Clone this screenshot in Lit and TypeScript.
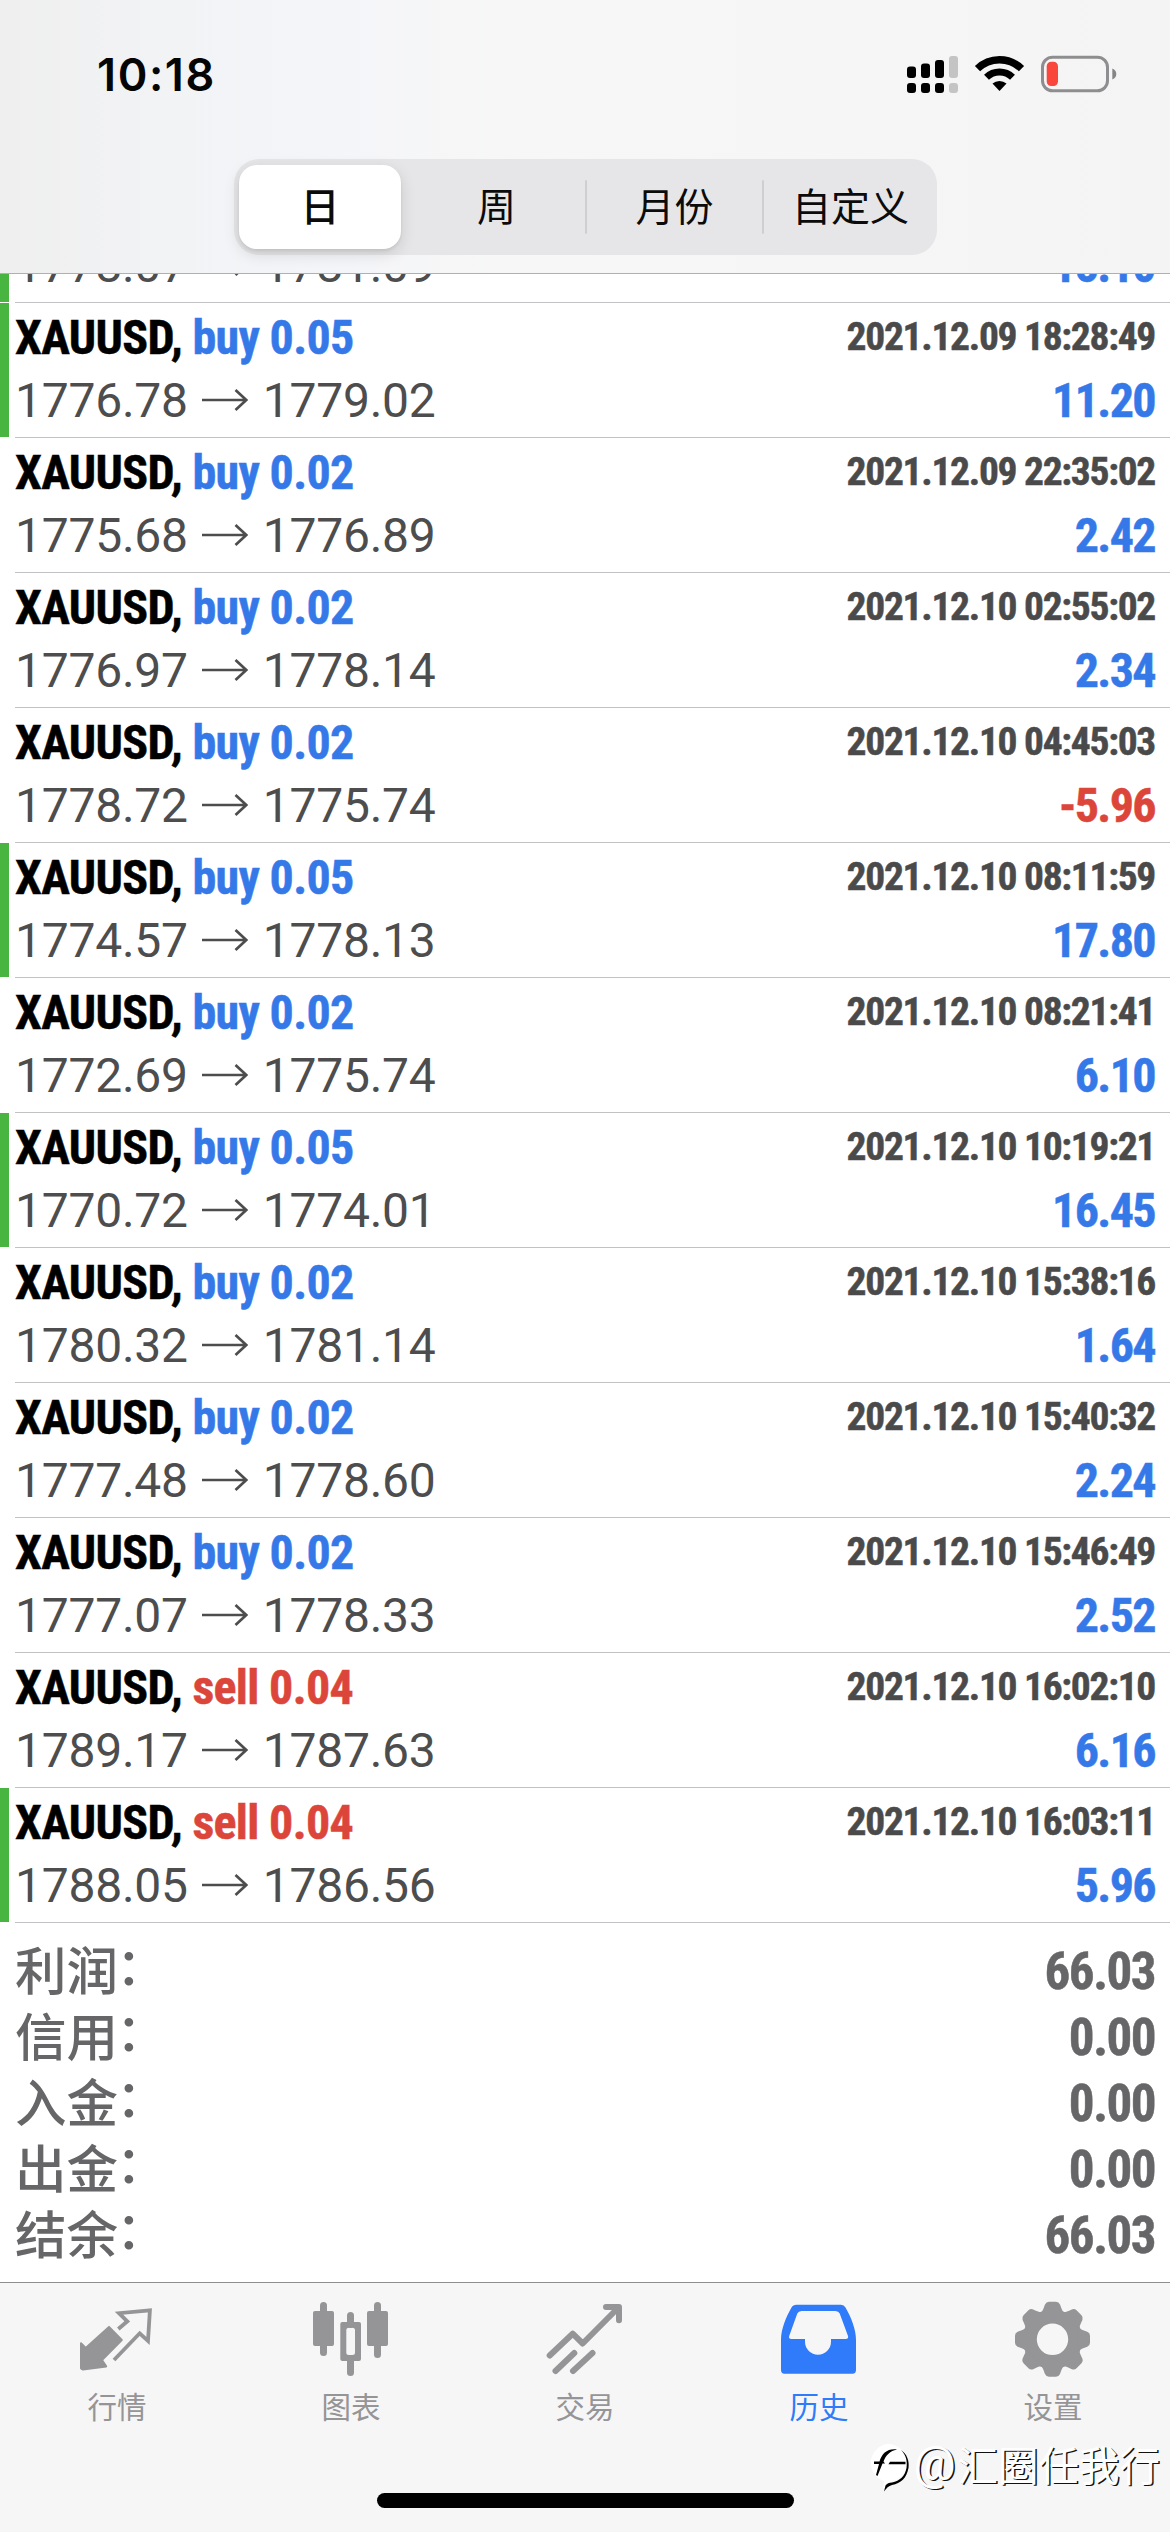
import { LitElement, html, css, svg } from "lit";
import { customElement } from "lit/decorators.js";
import { classMap } from "lit/directives/class-map.js";

interface Deal {
  side: "buy" | "sell";
  lots: string;
  open: string;
  close: string;
  time: string;
  profit: string;
  marked?: boolean;
}

const deal = (
  side: "buy" | "sell", lots: string, open: string, close: string,
  time: string, profit: string, marked = false,
): Deal => ({ side, lots, open, close, time, profit, marked });

const DEALS: Deal[] = [
  deal("buy", "0.05", "1778.07", "1781.09", "", "15.10", true),
  deal("buy", "0.05", "1776.78", "1779.02", "2021.12.09 18:28:49", "11.20", true),
  deal("buy", "0.02", "1775.68", "1776.89", "2021.12.09 22:35:02", "2.42"),
  deal("buy", "0.02", "1776.97", "1778.14", "2021.12.10 02:55:02", "2.34"),
  deal("buy", "0.02", "1778.72", "1775.74", "2021.12.10 04:45:03", "-5.96"),
  deal("buy", "0.05", "1774.57", "1778.13", "2021.12.10 08:11:59", "17.80", true),
  deal("buy", "0.02", "1772.69", "1775.74", "2021.12.10 08:21:41", "6.10"),
  deal("buy", "0.05", "1770.72", "1774.01", "2021.12.10 10:19:21", "16.45", true),
  deal("buy", "0.02", "1780.32", "1781.14", "2021.12.10 15:38:16", "1.64"),
  deal("buy", "0.02", "1777.48", "1778.60", "2021.12.10 15:40:32", "2.24"),
  deal("buy", "0.02", "1777.07", "1778.33", "2021.12.10 15:46:49", "2.52"),
  deal("sell", "0.04", "1789.17", "1787.63", "2021.12.10 16:02:10", "6.16"),
  deal("sell", "0.04", "1788.05", "1786.56", "2021.12.10 16:03:11", "5.96", true),
];

const SUMMARY = [
  ["利润", "66.03"],
  ["信用", "0.00"],
  ["入金", "0.00"],
  ["出金", "0.00"],
  ["结余", "66.03"],
];

const TABS = [
  {
    label: "行情",
    icon: svg`
      <path fill="currentColor" stroke="currentColor" stroke-width="2" stroke-linejoin="round"
        d="M9 43.2 13.7 48 37 26.9 49.8 40 30 60 34.2 66.4 11 69.6 9 68.3Z"/>
      <path fill="none" stroke="currentColor" stroke-width="3.8"
        d="M46.3 29 55.3 21.3 47 13.2 77.9 10.3 76 41 67.7 33.3 42 60"/>`,
  },
  {
    label: "图表",
    icon: svg`<g fill="currentColor">
      <rect x="14" y="2" width="7" height="54" rx="3.5"/>
      <rect x="7" y="11" width="21" height="35" rx="2"/>
      <rect x="68" y="2" width="7" height="56" rx="3.5"/>
      <rect x="61" y="11" width="21" height="35" rx="2"/>
      <rect x="41" y="12" width="7" height="16" rx="3.5"/>
      <rect x="41" y="56" width="7" height="20" rx="3.5"/>
      <path fill-rule="evenodd" d="M36.300 22h16.700a2 2 0 0 1 2 2v35a2 2 0 0 1-2 2h-16.700a2 2 0 0 1-2-2v-35a2 2 0 0 1 2-2Z
        M42.800 27.700a2.500 2.500 0 0 0-2.500 2.500v22.300a2.500 2.500 0 0 0 2.500 2.500h3.700a2.500 2.500 0 0 0 2.500-2.500v-22.300a2.500 2.500 0 0 0-2.500-2.500Z"/>
    </g>`,
  },
  {
    label: "交易",
    icon: svg`<path fill="none" stroke="currentColor" stroke-width="6" stroke-linecap="round" stroke-linejoin="round"
      d="M9.700 55.500 32.700 33.700 42.700 43.500 78 8M66 6.900H79V20.200M15.500 71 34.300 53M33 71 52.500 53"/>`,
  },
  {
    label: "历史",
    icon: svg`<path fill="currentColor" fill-rule="evenodd"
      d="M22.500 4.700H67Q70 4.700 71.500 7.500C77 17 82 29 82 40V70Q82 73.700 78.500 73.700H10.500Q7 73.700 7 70V40C7 29 12 17 17.500 7.500Q19 4.700 22.500 4.700Z
        M27.500 11Q24.500 11 23.300 13.600L15.200 36Q14.300 39 17.500 39H31V42C31 49 37 54.700 44 54.700S57 49 57 42V39H71.500Q74.800 39 74 36L65.700 13.600Q64.600 11 61.500 11Z"/>`,
    active: true,
  },
  {
    label: "设置",
    icon: svg`
      <circle cx="44.500" cy="39.300" r="22.700" fill="none" stroke="currentColor" stroke-width="14"/>
      ${[0, 45, 90, 135, 180, 225, 270, 315].map((a) => svg`
        <path fill="currentColor" transform="rotate(${a} 44.500 39.300)"
          d="M31 14C35 12 35.500 8 37 4.500Q38.200 1.800 41 1.800H48Q50.800 1.800 52 4.500C53.500 8 54 12 58 14Z"/>`)}`,
  },
];

@customElement("status-bar")
class StatusBar extends LitElement {
  static styles = css`
    :host {
      display: flex;
      justify-content: space-between;
      padding: 47px 52px 0 97px;
      height: 112px;
      box-sizing: border-box;
    }
    .time {
      font: 600 45px/55px Inter, "Liberation Sans", sans-serif;
      letter-spacing: 1.600px;
      color: #050505;
    }
    svg { width: 212px; height: 40px; margin-top: 8px; }
  `;
  render() {
    return html`
      <div class="time">10:18</div>
      <svg viewBox="0 0 212 40">
        <rect x="1" y="11.500" width="9" height="11.500" rx="3"/>
        <rect x="15" y="8.500" width="9" height="14.500" rx="3"/>
        <rect x="29" y="5" width="9" height="18" rx="3"/>
        <rect x="43" y="1" width="9" height="22" rx="3" fill="#c4c4c5"/>
        <rect x="1" y="28" width="9" height="10" rx="3"/>
        <rect x="15" y="28" width="9" height="10" rx="3"/>
        <rect x="29" y="28" width="9" height="10" rx="3"/>
        <rect x="43" y="28" width="9" height="10" rx="3" fill="#c4c4c5"/>
        <path fill="none" stroke="#000" stroke-width="7.400" d="M71.500 13.700A31.500 31.500 0 0 1 115.500 13.700"/>
        <path fill="none" stroke="#000" stroke-width="7" d="M80.500 22.300A18.600 18.600 0 0 1 106.500 22.300"/>
        <path d="M86.500 28.600A10.500 10.500 0 0 1 100.500 28.600L93.500 36Z"/>
        <rect x="136.500" y="2.200" width="65" height="33.600" rx="10" fill="none" stroke="#8e8e90" stroke-width="3"/>
        <rect x="140.700" y="6.800" width="11.300" height="24.200" rx="4.500" fill="#f9473b"/>
        <path fill="#858587" d="M206.300 13.500C209 14.500 210.300 16.500 210.300 19S209 23.500 206.300 24.500Z"/>
      </svg>`;
  }
}

@customElement("period-switch")
class PeriodSwitch extends LitElement {
  static styles = css`
    :host {
      display: grid;
      grid-template-columns: 174px 177px 177px 175px;
      align-items: center;
      width: 703px;
      height: 96px;
      border-radius: 25px;
      background: #e6e6e8;
      font: 400 39px/79px "Noto Sans CJK SC", sans-serif;
      color: #0b0b0b;
      text-align: center;
    }
    .seg { display: flex; height: 84px; }
    .seg .label { flex: 1; }
    .seg.ruled::before {
      content: "";
      width: 2px;
      height: 54px;
      margin-top: 15px;
      border-radius: 1px;
      background: #cfcfd2;
    }
    .seg.on {
      width: 162px;
      margin-left: 5px;
      border-radius: 18px;
      background: #fff;
      font-weight: 500;
      box-shadow: 0 5px 16px rgba(0, 0, 0, 0.13), 0 2px 3px rgba(0, 0, 0, 0.07);
    }
  `;
  render() {
    return html`
      <div class="seg on"><span class="label">日</span></div>
      <div class="seg"><span class="label">周</span></div>
      <div class="seg ruled"><span class="label">月份</span></div>
      <div class="seg ruled"><span class="label">自定义</span></div>`;
  }
}

@customElement("deal-list")
class DealList extends LitElement {
  static styles = css`
    :host {
      display: flex;
      flex-direction: column;
      justify-content: flex-end;
      height: 1649px;
      overflow: hidden;
      background: #fff;
      font-family: "Roboto Condensed", Roboto, "Liberation Sans", sans-serif;
      font-weight: 700;
    }
    .row { display: flex; flex: none; height: 135px; }
    .mark { width: 9px; height: 134px; margin-right: 6px; }
    .mark.on { background: #47b53f; }
    .body {
      flex: 1;
      display: grid;
      grid-template: 64px 62px / auto auto;
      justify-content: space-between;
      padding: 3px 15px 0 0;
      border-bottom: 1px solid #c2c2c4;
      white-space: nowrap;
    }
    .title, .time, .profit { -webkit-text-stroke: 0.5px currentColor; }
    .title { font-size: 48px; line-height: 64px; letter-spacing: -0.680px; color: #000; }
    .time { font-size: 39.500px; line-height: 62px; letter-spacing: -1.300px; color: #4a4a4b; text-align: right; }
    .prices {
      display: flex;
      align-items: center;
      font: 400 48px/62px Roboto, "Liberation Sans", sans-serif;
      letter-spacing: -0.250px;
      color: #4d4d4e;
    }
    .prices svg { width: 46px; height: 24px; margin: 0 15px 2px 14px; }
    .profit { font-size: 48px; line-height: 62px; letter-spacing: -1.600px; text-align: right; }
    .buy, .gain { color: #3579e9; }
    .sell, .loss { color: #dc463a; }
  `;
  render() {
    return DEALS.map((d) => {
      const loss = d.profit.startsWith("-");
      return html`
        <div class="row">
          <div class=${classMap({ mark: true, on: !!d.marked })}></div>
          <div class="body">
            <div class="title">${d.time ? html`XAUUSD, <span class=${d.side}>${d.side} ${d.lots}</span>` : ""}</div>
            <div class="time">${d.time}</div>
            <div class="prices">
              <span>${d.open}</span>
              <svg viewBox="0 0 46 24"><path fill="none" stroke="currentColor" stroke-width="2.700" d="M0 12H44M33.500 2 44.300 12 33.500 22"/></svg>
              <span>${d.close}</span>
            </div>
            <div class=${classMap({ profit: true, loss, gain: !loss })}>${d.profit}</div>
          </div>
        </div>`;
    });
  }
}

@customElement("deal-summary")
class DealSummary extends LitElement {
  static styles = css`
    :host {
      display: block;
      height: 359px;
      box-sizing: border-box;
      padding: 14px 15px 0;
      background: #fff;
      color: #666567;
    }
    .line { display: flex; justify-content: space-between; height: 66px; }
    .name { display: flex; font: 500 51.500px/62px "Noto Sans CJK SC", sans-serif; }
    .colon { line-height: 52px; margin-left: -2px; }
    .value {
      font: 700 51px/70px "Roboto Condensed", Roboto, sans-serif;
      letter-spacing: -1.500px;
      -webkit-text-stroke: 0.5px currentColor;
    }
  `;
  render() {
    return SUMMARY.map(([name, value]) => html`
      <div class="line"><span class="name">${name}<span class="colon">：</span></span><span class="value">${value}</span></div>`);
  }
}

@customElement("tab-bar")
class TabBar extends LitElement {
  static styles = css`
    :host {
      display: flex;
      flex-direction: column;
      align-items: center;
      height: 250px;
      box-sizing: border-box;
      border-top: 1px solid #8f8f91;
      background: #f6f6f7;
    }
    .tabs { display: grid; grid-template-columns: repeat(5, 234px); padding-top: 17px; }
    .tab { display: flex; flex-direction: column; align-items: center; color: #959496; }
    .tab svg { width: 90px; height: 80px; }
    .tab span { font: 400 29.500px/40px "Noto Sans CJK SC", sans-serif; margin-top: 5px; }
    .tab.on { color: #2f7bfa; }
    .home { width: 417px; height: 15px; margin-top: 68px; border-radius: 8px; background: #000; }
  `;
  render() {
    return html`
      <div class="tabs">
        ${TABS.map((t) => html`
          <div class=${classMap({ tab: true, on: !!t.active })}>
            <svg viewBox="0 0 90 80">${t.icon}</svg>
            <span>${t.label}</span>
          </div>`)}
      </div>
      <div class="home"></div>`;
  }
}

@customElement("app-root")
class AppRoot extends LitElement {
  static styles = css`
    :host { display: block; position: relative; width: 1170px; height: 2532px; overflow: hidden; background: #fff; }
    header {
      display: flex;
      flex-direction: column;
      height: 274px;
      box-sizing: border-box;
      border-bottom: 1px solid #b0b0b2;
      background: linear-gradient(90deg, #efefef 0%, #f2f3f5 14%, #f4f5f9 28%, #f7f7f7 42%, #f6f6f7 75%, #f5f4f5 100%);
    }
    period-switch { margin: 47px 0 0 234px; }
    .credit {
      position: absolute;
      right: 10px;
      bottom: 38px;
      display: flex;
      align-items: center;
      color: #fff;
      font: 400 40.500px/60px "Noto Sans CJK SC", sans-serif;
      text-shadow: 1.500px 1.200px 0 #111;
    }
    .credit .at { font: 400 47px/56px Roboto, sans-serif; width: 44px; }
    .credit svg { width: 48px; height: 52px; margin: 6px -1px 0 0; }
  `;
  render() {
    return html`
      <header>
        <status-bar></status-bar>
        <period-switch></period-switch>
      </header>
      <deal-list></deal-list>
      <deal-summary></deal-summary>
      <tab-bar></tab-bar>
      <div class="credit">
        <svg viewBox="0 0 48 52">
          <path fill="#fff" d="M21 3A19 19 0 0 1 40 22C40 33 32 39 24 41L16 48 17 40A19 19 0 0 1 21 3Z"/>
          <g fill="#000">
            <path d="M7 20.500H12.500C15 12.500 20 7.500 30 8.500 23 10 19 14 16.500 20.500L18 22.500H15.500L10.500 35 9 34 12 23H7Z"/>
            <path d="M23 20.800H38.500V23.200H21.500Z"/>
            <path d="M34 9C40 13 42.500 20 41.500 27 39.500 37 34 42.500 25 44 21.500 45 19.500 47 17 50.500L18.500 44.500C20 42.500 22 41.800 25 41.500 33 40 38 35 39.500 27 40.500 20 39 14 34 9Z"/>
          </g>
        </svg>
        <span class="at">@</span><span>汇圈任我行</span>
      </div>`;
  }
}
